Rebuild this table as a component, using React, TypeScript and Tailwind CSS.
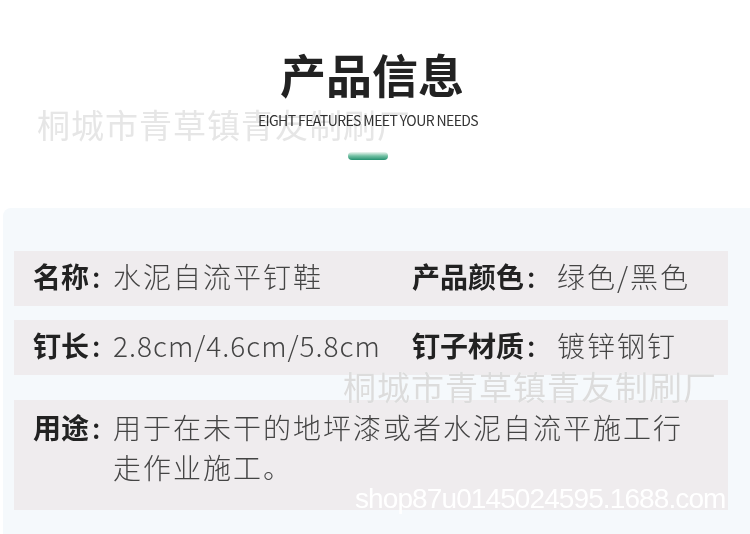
import React from "react";

interface InfoRow {
  label: string;
  value: string;
  label2?: string;
  value2?: string;
  tight?: boolean;
}

const rows: InfoRow[] = [
  { label: "名称", value: "水泥自流平钉鞋", label2: "产品颜色", value2: "绿色/黑色" },
  { label: "钉长", value: "2.8cm/4.6cm/5.8cm", label2: "钉子材质", value2: "镀锌钢钉", tight: true },
];

const font = { fontFamily: '"Noto Sans CJK SC", "Noto Sans", sans-serif' };

const Label = ({ text, width }: { text: string; width: string }) => (
  <span className={`${width} shrink-0 text-[28px] leading-[40px] font-bold text-[#222]`}>
    {text}
    <span className="ml-[3px] font-medium">:</span>
  </span>
);

export default function App() {
  return (
    <div className="relative w-[750px] h-[534px] overflow-hidden bg-white text-[#222]" style={font}>
      {/* header */}
      <div className="flex flex-col items-center pr-[14px] pt-[40px]">
        <h1 className="ml-[8px] text-[46px] leading-[66px] font-bold text-[#222]">产品信息</h1>
        <p className="mt-[4px] text-[14px] leading-[20px] tracking-[-0.6px] text-[#333]">
          EIGHT FEATURES MEET YOUR NEEDS
        </p>
        <div className="mt-[22px] w-[40px] h-[8px] rounded-full bg-gradient-to-b from-[#eef6f2] via-[#6fbfa2] to-[#1f9170]" />
      </div>

      {/* panel */}
      <div className="mt-[48px] ml-[3px] h-[340px] rounded-tl-[8px] bg-[#f5f9fc] pt-[43px] pl-[11px] pr-[22px]">
        <div className="flex flex-col">
          {rows.map((row, idx) => (
            <div
              key={idx}
              className={`flex items-center h-[55px] bg-[#efecee] pl-[19px] pb-[6px] ${idx === 1 ? "mt-[14px]" : ""}`}
            >
              <div className="flex w-[379px] items-center">
                <Label text={row.label} width="w-[80px]" />
                <span
                  className={`text-[28px] font-light text-[#444] ${row.tight ? "tracking-[1px]" : "tracking-[2px]"}`}
                >
                  {row.value}
                </span>
              </div>
              <div className="flex items-center">
                <Label text={row.label2 ?? ""} width="w-[145px]" />
                <span className="text-[28px] font-light tracking-[2px] text-[#444]">{row.value2}</span>
              </div>
            </div>
          ))}
          <div className="mt-[25px] flex h-[110px] bg-[#efecee] pl-[19px] pt-[7px]">
            <Label text="用途" width="w-[80px]" />
            <span className="w-[580px] text-[28px] leading-[40px] font-light tracking-[2px] text-[#444]">
              用于在未干的地坪漆或者水泥自流平施工行走作业施工。
            </span>
          </div>
        </div>
      </div>

      {/* watermarks */}
      <div className="absolute left-[37px] top-[104px] text-[33px] leading-[40px] tracking-[1px] text-[#e6e6e6] mix-blend-multiply pointer-events-none">
        桐城市青草镇青友制刷厂
      </div>
      <div
        className="absolute left-[343px] top-[366px] text-[33px] leading-[40px] tracking-[1px] text-[#dcdcdc] pointer-events-none"
        style={{ textShadow: "0 0 1px #fff" }}
      >
        桐城市青草镇青友制刷厂
      </div>
      <div
        className="absolute left-[355px] top-[482px] text-[28px] leading-[34px] tracking-[-0.9px] text-white pointer-events-none"
        style={{ fontFamily: '"Liberation Sans", Arial, sans-serif' }}
      >
        shop87u0145024595.1688.com
      </div>
    </div>
  );
}
